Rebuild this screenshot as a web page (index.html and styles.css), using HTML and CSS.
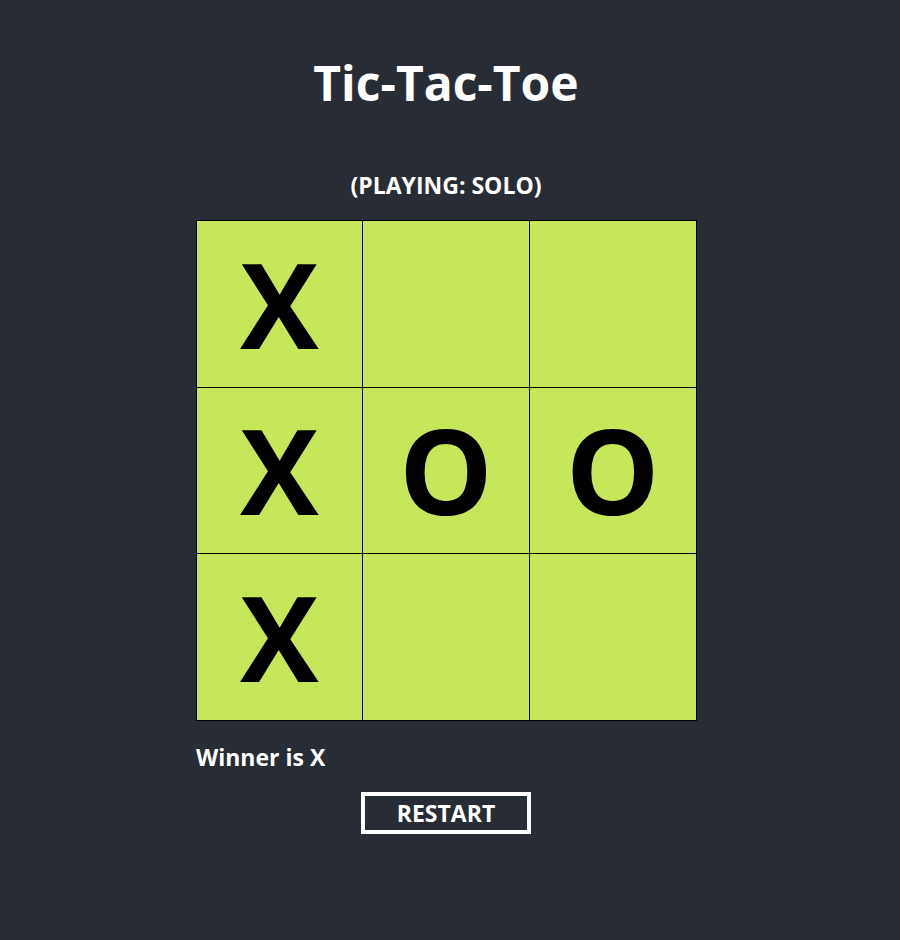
FILE: index.html
```html
<!DOCTYPE html>
<html>
<head>
<meta charset="utf-8">
<link rel="stylesheet" href="styles.css">
</head>
<body>
<main class="app">
  <h1 class="title">Tic-Tac-Toe</h1>
  <p class="mode">(PLAYING: SOLO)</p>
  <div class="board">
    <div class="cell">X</div>
    <div class="cell"></div>
    <div class="cell"></div>
    <div class="cell">X</div>
    <div class="cell">O</div>
    <div class="cell">O</div>
    <div class="cell">X</div>
    <div class="cell"></div>
    <div class="cell"></div>
  </div>
  <div class="status">Winner is X</div>
  <button class="restart">RESTART</button>
</main>
</body>
</html>
```
FILE: styles.css
```css
html, body {
  margin: 0;
  padding: 0;
  background: #282c34;
  height: 100%;
}
body {
  font-family: "Open Sans", "Noto Sans", sans-serif;
  color: #ffffff;
}
.app {
  width: 892px;
  display: flex;
  flex-direction: column;
  align-items: center;
}
.title {
  margin: 48px 0 0;
  font-size: 48px;
  line-height: 70px;
  font-weight: 700;
}
.mode {
  margin: 52px 0 0;
  font-size: 23px;
  line-height: 30px;
  font-weight: 700;
}
.board {
  margin-top: 20px;
  width: 501px;
  height: 501px;
  display: grid;
  grid-template-columns: repeat(3, 1fr);
  grid-template-rows: repeat(3, 1fr);
  border-top: 1px solid #000;
  border-left: 1px solid #000;
  box-sizing: border-box;
}
.cell {
  background: #c6e75a;
  border-right: 1px solid #000;
  border-bottom: 1px solid #000;
  color: #000;
  font-size: 118px;
  font-weight: 700;
  display: flex;
  align-items: center;
  justify-content: center;
  line-height: 1;
}
.status {
  align-self: stretch;
  margin: 21px 0 0 196px;
  font-size: 23px;
  line-height: 30px;
  font-weight: 700;
}
.restart {
  margin-top: 20px;
  width: 170px;
  height: 42px;
  background: transparent;
  border: 4px solid #fff;
  color: #fff;
  font-family: "Open Sans", "Noto Sans", sans-serif;
  font-size: 23px;
  font-weight: 700;
  padding: 0;
  line-height: 1;
}
```
